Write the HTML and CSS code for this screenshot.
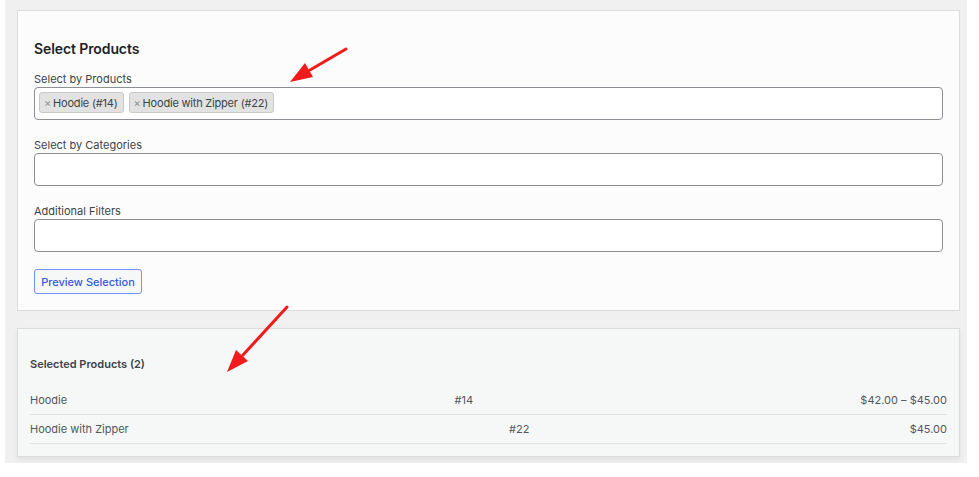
FILE: index.html
```html
<!DOCTYPE html>
<html lang="en">
<head>
  <meta charset="UTF-8">
  <meta name="viewport" content="width=device-width, initial-scale=1.0">
  <title>Select Products</title>
  <link rel="stylesheet" href="styles.css">
</head>
<body>
  <div class="page">
    <div class="panel">
      <h2>Select Products</h2>
      <div class="form-group">
        <label>Select by Products</label>
        <div class="select-box">
          <span class="tag"><span class="tag-x">×</span>Hoodie (#14)</span>
          <span class="tag"><span class="tag-x">×</span>Hoodie with Zipper (#22)</span>
        </div>
      </div>
      <div class="form-group">
        <label>Select by Categories</label>
        <div class="select-box"></div>
      </div>
      <div class="form-group">
        <label>Additional Filters</label>
        <div class="select-box"></div>
      </div>
      <button type="button" class="preview-btn">Preview Selection</button>
    </div>

    <div class="results">
      <h3>Selected Products (2)</h3>
      <div class="result-row">
        <span>Hoodie</span>
        <span>#14</span>
        <span>$42.00 – $45.00</span>
      </div>
      <div class="result-row">
        <span>Hoodie with Zipper</span>
        <span>#22</span>
        <span>$45.00</span>
      </div>
    </div>
  </div>

  <!-- annotation arrows drawn over the screenshot -->
  <svg class="arrows" width="979" height="477" viewBox="0 0 979 477">
    <line x1="346" y1="49" x2="310" y2="70" stroke="#f21b1b" stroke-width="3" stroke-linecap="round"/>
    <polygon points="290,82 313,77 305,63" fill="#f21b1b"/>
    <line x1="287" y1="307" x2="243" y2="355" stroke="#f21b1b" stroke-width="3" stroke-linecap="round"/>
    <polygon points="227,372 248,361 236,350" fill="#f21b1b"/>
  </svg>
</body>
</html>
```

FILE: styles.css
```css
body {
  margin: 0;
  background: #fff;
  font-family: Inter, "Noto Sans", sans-serif;
  color: #3c434a;
  position: relative;
}
.page {
  margin-left: 5px;
  width: 962px;
  height: 463px;
  box-sizing: border-box;
  padding: 10px 7px 0 12px;
  background: #f0f0f1;
}
.panel {
  background: #fcfcfc;
  border: 1px solid #dcdcde;
  padding: 16px;
  height: 301px;
  box-sizing: border-box;
}
.panel h2 {
  margin: 12px 0 12px;
  font-size: 14px;
  line-height: 20px;
  font-weight: 600;
  color: #1d2327;
  letter-spacing: -0.1px;
}
.form-group {
  margin-bottom: 17px;
}
.form-group label {
  display: block;
  font-size: 11px;
  line-height: 16px;
  color: #3c434a;
}
.select-box {
  height: 33px;
  box-sizing: border-box;
  border: 1px solid #8c8f94;
  border-radius: 4px;
  background: #fff;
  padding: 4px;
  display: flex;
  gap: 5px;
  align-items: flex-start;
}
.tag {
  display: flex;
  align-items: center;
  height: 21px;
  box-sizing: border-box;
  padding: 0 5px 0 4px;
  background: #e2e2e2;
  border: 1px solid #c9c9c9;
  border-radius: 3px;
  font-size: 11px;
  letter-spacing: -0.2px;
  color: #3c434a;
}
.tag-x {
  color: #8c8f94;
  font-size: 11px;
  margin-right: 2px;
}
.preview-btn {
  display: block;
  height: 25px;
  width: 108px;
  padding: 0;
  font-family: inherit;
  font-size: 11px;
  font-weight: 500;
  color: #3858e9;
  background: #f6f7f7;
  border: 1px solid #7b90ff;
  border-radius: 3px;
}
.results {
  margin-top: 17px;
  background: #f6f7f7;
  border: 1px solid #dcdcde;
  padding: 12px 12px;
  box-shadow: 0 3px 6px rgba(0, 0, 0, 0.06);
}
.results h3 {
  margin: 15px 0 14px;
  font-size: 11px;
  line-height: 16px;
  font-weight: 600;
  color: #3c434a;
}
.result-row {
  display: flex;
  justify-content: space-between;
  padding: 6px 0;
  border-bottom: 1px solid #e0e0e0;
  font-size: 11px;
  line-height: 16px;
  color: #50575e;
}
.arrows {
  position: absolute;
  left: 0;
  top: 0;
  pointer-events: none;
}
```
